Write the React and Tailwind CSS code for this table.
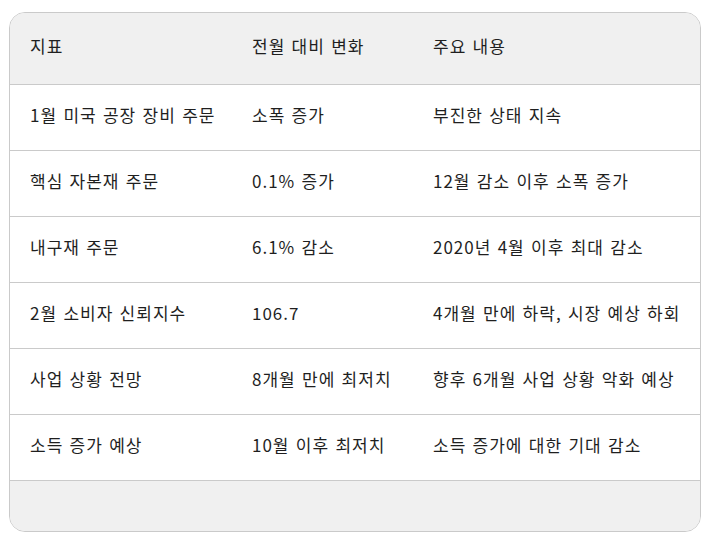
import React from 'react';

const rows = [
  ['1월 미국 공장 장비 주문', '소폭 증가', '부진한 상태 지속'],
  ['핵심 자본재 주문', '0.1% 증가', '12월 감소 이후 소폭 증가'],
  ['내구재 주문', '6.1% 감소', '2020년 4월 이후 최대 감소'],
  ['2월 소비자 신뢰지수', '106.7', '4개월 만에 하락, 시장 예상 하회'],
  ['사업 상황 전망', '8개월 만에 최저치', '향후 6개월 사업 상황 악화 예상'],
  ['소득 증가 예상', '10월 이후 최저치', '소득 증가에 대한 기대 감소'],
];

const grid = 'grid grid-cols-[222px_181px_1fr] items-center';
const cell = 'pl-[20px] pb-[5px] whitespace-nowrap';

const App = () => {
  return (
    <div
      className="w-[710px] h-[542px] bg-white pl-[9px] pt-[12px]"
      style={{ fontFamily: '"Noto Sans CJK KR", "Noto Sans", sans-serif' }}
    >
      <div className="w-[692px] overflow-hidden rounded-[16px] border border-[#cacaca] text-[17px] tracking-[1px] [word-spacing:1.5px] text-[#1f1f1f]">
        {/* Header */}
        <div className={`${grid} h-[72px] bg-[#f0f0f0] border-b border-[#cacaca]`}>
          <div className={cell}>지표</div>
          <div className={cell}>전월 대비 변화</div>
          <div className={cell}>주요 내용</div>
        </div>

        {/* Rows */}
        {rows.map((r, i) => (
          <div key={i} className={`${grid} h-[66px] bg-white border-b border-[#cacaca]`}>
            <div className={cell}>{r[0]}</div>
            <div className={cell}>{r[1]}</div>
            <div className={cell}>{r[2]}</div>
          </div>
        ))}

        {/* Footer */}
        <div className="h-[50px] bg-[#f0f0f0]" />
      </div>
    </div>
  );
};

export default App;
